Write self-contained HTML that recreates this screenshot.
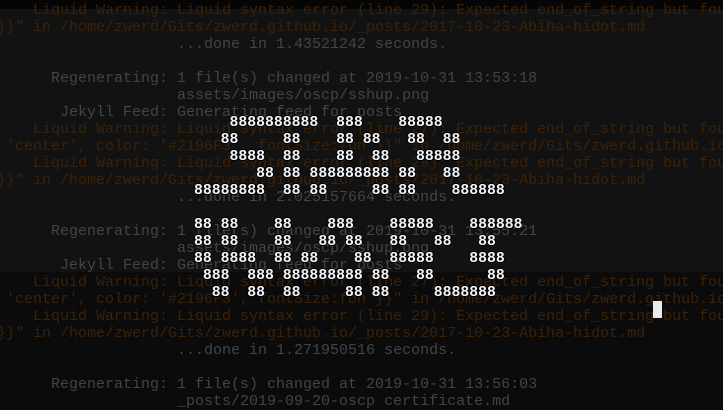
<!DOCTYPE html>
<html><head><meta charset="utf-8"><style>
html,body{margin:0;padding:0;width:723px;height:407px;overflow:hidden;background:#0b0b0b}
.bg1{position:absolute;left:0;top:9px;width:723px;height:263px;background:#121212}
.bg0{position:absolute;left:0;top:0;width:723px;height:9px;background:#050505}
pre{margin:0;position:absolute;font-family:"Liberation Mono",monospace;white-space:pre}
#term{left:-3px;top:2px;font-size:15px;line-height:17px;color:#444}
.w{color:#3c2108}
#art{left:194px;top:115px;font-size:14.8px;line-height:17px;color:#f2f4f8;font-weight:bold;
text-shadow:1px 0 0 #000,-1px 0 0 #000,0 1px 0 #000,0 -1px 0 #000}
#cur{position:absolute;left:653px;top:301px;width:9px;height:17px;background:#ececec}
</style></head><body>
<div class="bg0"></div><div class="bg1"></div>
<pre id="term"><span class="w">    Liquid Warning: Liquid syntax error (line 29): Expected end_of_string but found</span>
<span class="w">}}" in /home/zwerd/Gits/zwerd.github.io/_posts/2017-10-23-Abiha-hidot.md</span>
                    ...done in 1.43521242 seconds.

      Regenerating: 1 file(s) changed at 2019-10-31 13:53:18
                    assets/images/oscp/sshup.png
       Jekyll Feed: Generating feed for posts
<span class="w">    Liquid Warning: Liquid syntax error (line 27): Expected end_of_string but found</span>
<span class="w"> 'center', color: '#2196F3', fontSize:fon }}" in /home/zwerd/Gits/zwerd.github.io</span>
<span class="w">    Liquid Warning: Liquid syntax error (line 29): Expected end_of_string but found</span>
<span class="w">}}" in /home/zwerd/Gits/zwerd.github.io/_posts/2017-10-23-Abiha-hidot.md</span>
                    ...done in 2.025157664 seconds.

      Regenerating: 1 file(s) changed at 2019-10-31 13:55:21
                    assets/images/oscp/sshup.png
       Jekyll Feed: Generating feed for posts
<span class="w">    Liquid Warning: Liquid syntax error (line 27): Expected end_of_string but found</span>
<span class="w"> 'center', color: '#2196F3', fontSize:fon }}" in /home/zwerd/Gits/zwerd.github.io</span>
<span class="w">    Liquid Warning: Liquid syntax error (line 29): Expected end_of_string but found</span>
<span class="w">}}" in /home/zwerd/Gits/zwerd.github.io/_posts/2017-10-23-Abiha-hidot.md</span>
                    ...done in 1.271950516 seconds.

      Regenerating: 1 file(s) changed at 2019-10-31 13:56:03
                    _posts/2019-09-20-oscp certificate.md</pre>
<pre id="art">    8888888888  888    88888
   88     88    88 88   88  88
    8888  88    88  88   88888
       88 88 888888888 88   88
88888888  88 88     88 88    888888

88 88    88    888    88888    888888
88 88    88   88 88   88   88   88
88 8888  88 88    88  88888    8888
 888  888 888888888 88   88      88
  88  88  88     88 88     8888888</pre>
<div id="cur"></div>
</body></html>
